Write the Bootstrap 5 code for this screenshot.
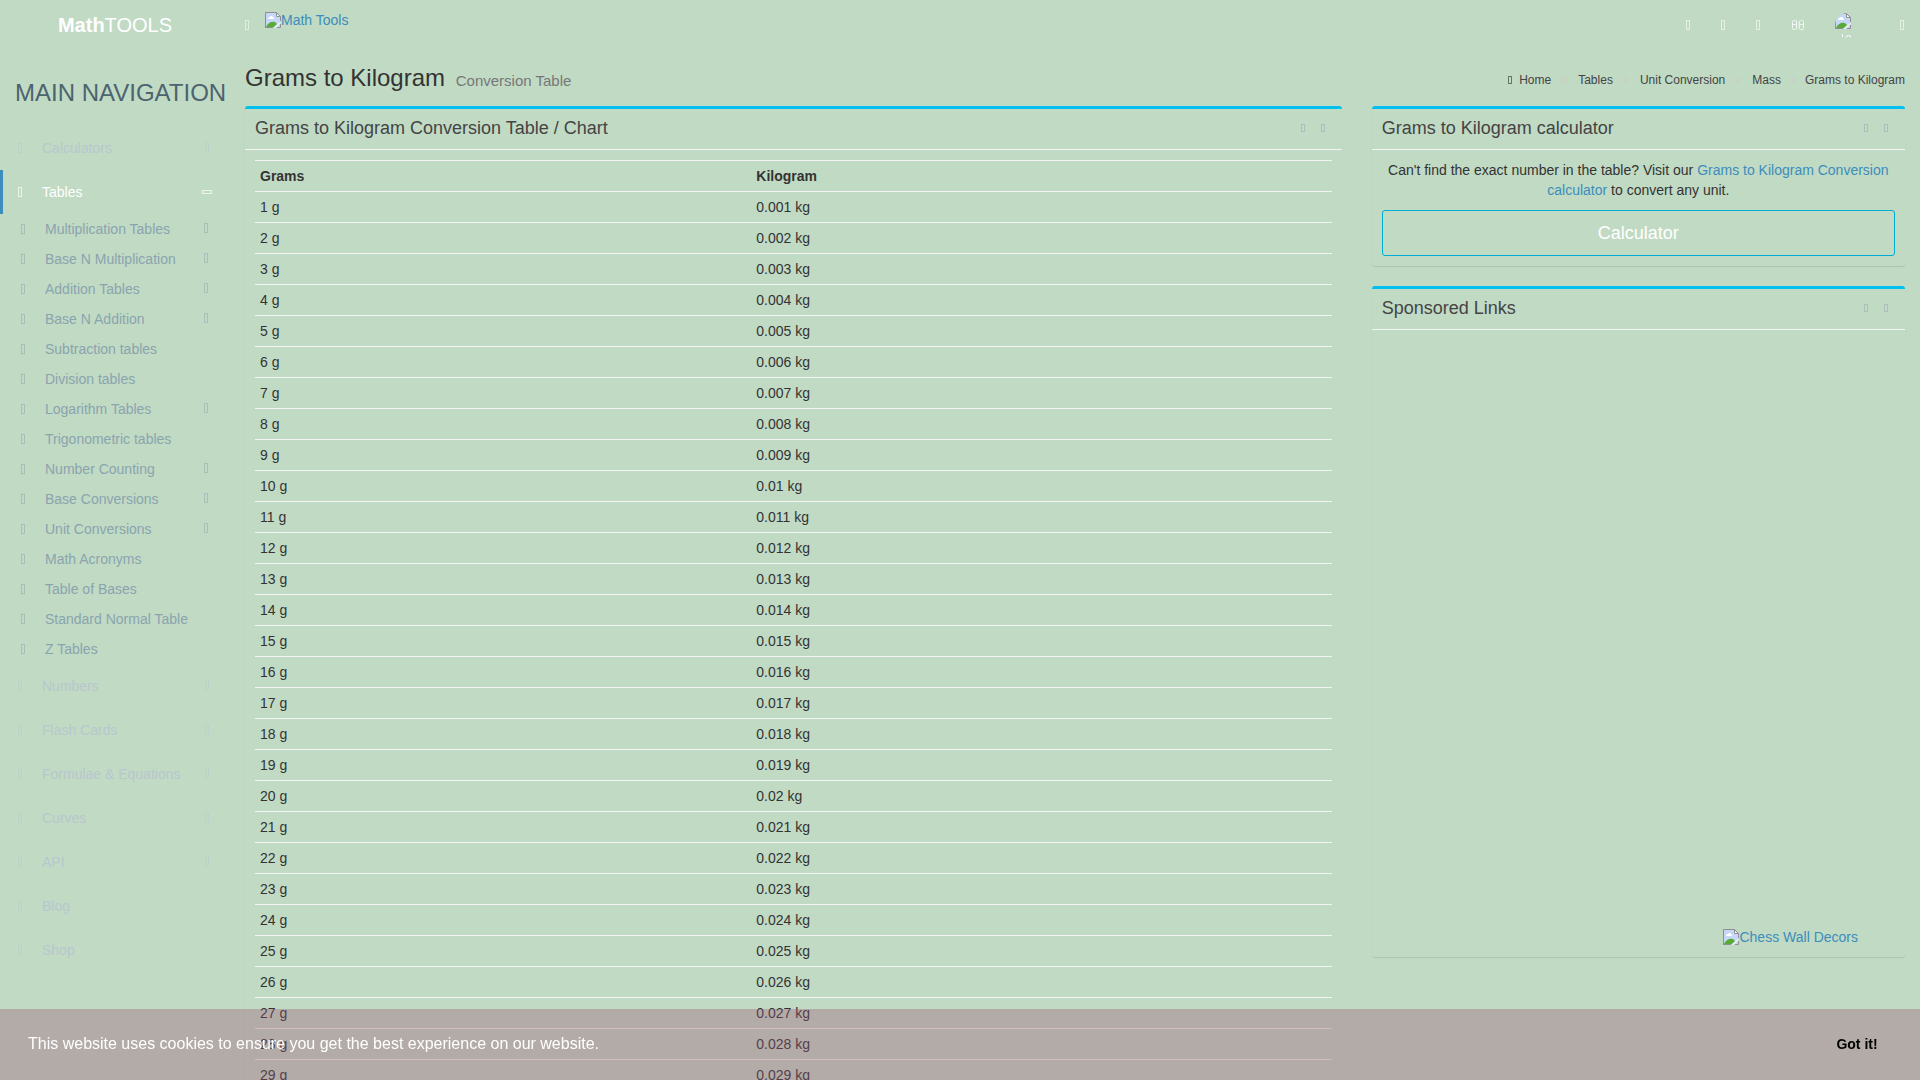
<!DOCTYPE html>
<html lang="en">
<head>
<meta charset="utf-8">
<meta name="viewport" content="width=device-width, initial-scale=1">
<title>Grams to Kilogram Conversion Table</title>
<link href="https://cdn.jsdelivr.net/npm/bootstrap@5.3.0/dist/css/bootstrap.min.css" rel="stylesheet">
<style>
body{background:#c1dac4;color:#333;font-family:"Liberation Sans",Arial,sans-serif;font-size:14px;line-height:20px}
a{color:#3c8dbc;text-decoration:none}
button{font-family:inherit}
.topbar{height:50px}
.topbar-main{padding-left:15px}
.sidebar,.brand{width:230px;flex:none}
.brand{font-size:20px;line-height:50px;color:#fff}
.glyph{display:inline-block;width:4px;height:10px;border:1px solid currentColor;opacity:.5}
.glyph-sm{height:8px}
.glyph-wide{width:10px;height:4px;opacity:.8}
.pic{width:16px;height:16px;flex:none;display:block}
.pic-link{line-height:16px}
.top-icons{color:#fff;padding-right:16px}
.top-icons .glyph{opacity:.6}
.icon-btn{background:none;border:0;padding:0;color:inherit;display:flex}
.icon-gap{margin-left:31px}
.lang-gap{margin-left:32px}
.user-gap{margin-left:31px}
.cog-gap{margin-left:40px}
.avatar{width:25px;height:25px;display:block}
.nav-title{font-size:24px;line-height:26px;color:#4b646f;padding:30px 0 20px 15px;margin:0;font-weight:400;white-space:nowrap}
.side-link{display:flex;align-items:center;justify-content:space-between;height:44px;padding:0 21px 0 15px;border-left:3px solid transparent;color:#b8c7ce}
.label-part .glyph{margin-right:20px}
.side-link.current{color:#fff;border-left-color:#3c8dbc;padding-right:18px}
.side-link.current .glyph{opacity:.7}
.sub-link{display:flex;align-items:center;justify-content:space-between;height:30px;padding:0 22px 0 21px;color:#8aa4af}
.side-link>.glyph:last-child,.sub-link>.glyph:last-child{margin-bottom:2px}
.side-link.current>.glyph:last-child{margin-bottom:0}
.page-title{font-size:24px;line-height:26px;margin:0;font-weight:400}
.page-title small{font-size:15px;color:#777;margin-left:4px}
.page-head{padding:15px 0;height:56px}
.content-area{padding:0 15px}
.crumbs{font-size:12px;line-height:18px;padding-top:6px;color:#444}
.crumbs a{color:#444}
.crumbs li+li::before{content:">";color:#ccc;margin:0 11px 0 9px}
.crumbs li.active::before{margin-right:8px}
.crumbs .glyph{margin-right:7px;height:8px;opacity:.7}
.row-wide{--bs-gutter-x:30px}
.panel{border-top:3px solid #00c0ef;border-radius:3px;box-shadow:0 1px 1px rgba(0,0,0,.1);margin-bottom:20px}
.panel-head{height:41px;padding:0 17px 2px 10px;border-bottom:1px solid #f4f4f4;color:#444}
.panel-head h2{font-size:18px;line-height:20px;margin:0;font-weight:400}
.panel-tools{color:#97a0b3;gap:16px}
.panel-inner{padding:10px}
.units{width:100%;margin:0}
.units th,.units td{padding:5px;border-top:1px solid #f4f4f4;line-height:20px;text-align:left}
.units th:first-child{width:46.1%}
.calc-text{margin-bottom:10px}
.calc-btn{height:46px;border:1px solid #00acd6;border-radius:3px;font-size:18px;color:#fff;padding:0;display:flex;align-items:center;justify-content:center}
.ad-space{height:588px}
.ad-link{padding:1px 37px 0 0}
.ad-inner{padding-bottom:12px}
.cookie{background:rgba(153,84,116,.35);padding:0 28px 2px;height:71px;font-size:16px;color:#fff}
.cookie button{width:70px;height:32px;border:0;background:none;padding:0;color:#000;font-size:14px;font-weight:700}
</style>
<script src="https://cdn.jsdelivr.net/npm/bootstrap@5.3.0/dist/js/bootstrap.bundle.min.js"></script>
</head>
<body class="vh-100 overflow-hidden">
<svg width="0" height="0" class="position-absolute" aria-hidden="true">
  <symbol id="broken" viewBox="0 0 16 16">
    <path d="M.5 .5H11.500L15.500 4.500V15.500H.500Z" fill="#c6d7f7"/>
    <path d="M3 6.500C3 5 4.500 5 5 5C5.500 3.500 8 3.800 8 5.500C9.500 5.500 9.500 7 8.500 7H4Q3 7 3 6.500Z" fill="#fff"/>
    <path d="M1 15C3 11 6 9.500 8.500 9.800C10.500 10 11.500 11.500 12 12L9 15Z" fill="#57ab36"/>
    <path d="M11 1V5H15Z" fill="#fff"/>
    <path d="M.5 16V.5H11.500L15.500 4.500V9M11.500 .5V4.500H15.500M0 15.500H8M12 15.500H15.500V12" fill="none" stroke="#8f8f8f"/>
    <path d="M8.500 15.500L15.500 9.500V11.500L11 15.500Z" fill="#e8f3e8"/>
  </symbol>
</svg>

<header class="topbar d-flex">
  <a href="#" class="brand text-center"><b>Math</b>TOOLS</a>
  <div class="topbar-main d-flex flex-grow-1 justify-content-between">
    <div class="d-flex">
      <button class="icon-btn text-white pt-1 mt-3 me-3 align-self-start" aria-label="Toggle navigation"><span class="glyph"></span></button>
      <a href="#" class="pic-link d-flex align-self-start pt-2 mt-1"><svg class="pic"><use href="#broken"/></svg>Math Tools</a>
    </div>
    <nav class="top-icons d-flex align-items-center" aria-label="Account">
      <button class="icon-btn" aria-label="Share"><span class="glyph"></span></button>
      <button class="icon-btn icon-gap" aria-label="Like"><span class="glyph"></span></button>
      <button class="icon-btn icon-gap" aria-label="Follow"><span class="glyph"></span></button>
      <button class="icon-btn lang-gap" aria-label="Language"><svg width="12" height="10" fill="none" stroke="#fff" opacity=".75"><rect x=".5" y=".5" width="4" height="9" rx="1"/><rect x="7.500" y=".5" width="4" height="9" rx="1"/><path d="M1 4.500H5M7 4.500H11"/><path d="M6 1V9" opacity=".4"/></svg></button>
      <a href="#" class="user-gap" aria-label="User"><svg class="avatar" viewBox="0 0 25 25"><clipPath id="round"><circle cx="12.500" cy="12.500" r="12.500"/></clipPath><g clip-path="url(#round)"><use href="#broken" width="16" height="16"/><path d="M7.500 21V24M11 24.500Q11.500 22.500 13.500 22.500T16 24.500" stroke="#fff" fill="none"/></g></svg></a>
      <button class="icon-btn cog-gap" aria-label="Settings"><span class="glyph"></span></button>
    </nav>
  </div>
</header>

<div class="d-flex">
  <aside class="sidebar">
    <h2 class="nav-title">MAIN NAVIGATION</h2>
    <nav aria-label="Main">
      <a href="#" class="side-link"><span class="label-part"><i class="glyph"></i>Calculators</span><i class="glyph"></i></a>
      <a href="#" class="side-link current"><span class="label-part"><i class="glyph"></i>Tables</span><i class="glyph glyph-wide"></i></a>
      <div class="submenu">
        <a href="#" class="sub-link"><span class="label-part"><i class="glyph"></i>Multiplication Tables</span><i class="glyph"></i></a>
        <a href="#" class="sub-link"><span class="label-part"><i class="glyph"></i>Base N Multiplication</span><i class="glyph"></i></a>
        <a href="#" class="sub-link"><span class="label-part"><i class="glyph"></i>Addition Tables</span><i class="glyph"></i></a>
        <a href="#" class="sub-link"><span class="label-part"><i class="glyph"></i>Base N Addition</span><i class="glyph"></i></a>
        <a href="#" class="sub-link"><span class="label-part"><i class="glyph"></i>Subtraction tables</span></a>
        <a href="#" class="sub-link"><span class="label-part"><i class="glyph"></i>Division tables</span></a>
        <a href="#" class="sub-link"><span class="label-part"><i class="glyph"></i>Logarithm Tables</span><i class="glyph"></i></a>
        <a href="#" class="sub-link"><span class="label-part"><i class="glyph"></i>Trigonometric tables</span></a>
        <a href="#" class="sub-link"><span class="label-part"><i class="glyph"></i>Number Counting</span><i class="glyph"></i></a>
        <a href="#" class="sub-link"><span class="label-part"><i class="glyph"></i>Base Conversions</span><i class="glyph"></i></a>
        <a href="#" class="sub-link"><span class="label-part"><i class="glyph"></i>Unit Conversions</span><i class="glyph"></i></a>
        <a href="#" class="sub-link"><span class="label-part"><i class="glyph"></i>Math Acronyms</span></a>
        <a href="#" class="sub-link"><span class="label-part"><i class="glyph"></i>Table of Bases</span></a>
        <a href="#" class="sub-link"><span class="label-part"><i class="glyph"></i>Standard Normal Table</span></a>
        <a href="#" class="sub-link"><span class="label-part"><i class="glyph"></i>Z Tables</span></a>
      </div>
      <a href="#" class="side-link"><span class="label-part"><i class="glyph"></i>Numbers</span><i class="glyph"></i></a>
      <a href="#" class="side-link"><span class="label-part"><i class="glyph"></i>Flash Cards</span><i class="glyph"></i></a>
      <a href="#" class="side-link"><span class="label-part"><i class="glyph"></i>Formulae &amp; Equations</span><i class="glyph"></i></a>
      <a href="#" class="side-link"><span class="label-part"><i class="glyph"></i>Curves</span><i class="glyph"></i></a>
      <a href="#" class="side-link"><span class="label-part"><i class="glyph"></i>API</span><i class="glyph"></i></a>
      <a href="#" class="side-link"><span class="label-part"><i class="glyph"></i>Blog</span></a>
      <a href="#" class="side-link"><span class="label-part"><i class="glyph"></i>Shop</span></a>
    </nav>
  </aside>

  <main class="content-area flex-grow-1">
    <div class="page-head d-flex justify-content-between">
      <h1 class="page-title">Grams to Kilogram <small>Conversion Table</small></h1>
      <ol class="crumbs list-unstyled d-flex m-0">
        <li><a href="#"><i class="glyph"></i>Home</a></li><li><a href="#">Tables</a></li><li><a href="#">Unit Conversion</a></li><li><a href="#">Mass</a></li><li class="active">Grams to Kilogram</li>
      </ol>
    </div>
    <div class="row row-wide">
      <div class="col-8">
        <section class="panel">
          <div class="panel-head d-flex justify-content-between align-items-center">
            <h2>Grams to Kilogram Conversion Table / Chart</h2>
            <div class="panel-tools d-flex"><button class="icon-btn" aria-label="Collapse"><i class="glyph glyph-sm"></i></button><button class="icon-btn" aria-label="Close"><i class="glyph glyph-sm"></i></button></div>
          </div>
          <div class="panel-inner">
            <table class="units">
              <thead><tr><th>Grams</th><th>Kilogram</th></tr></thead>
              <tbody id="unit-rows"></tbody>
            </table>
          </div>
        </section>
      </div>
      <div class="col-4">
        <section class="panel">
          <div class="panel-head d-flex justify-content-between align-items-center">
            <h2>Grams to Kilogram calculator</h2>
            <div class="panel-tools d-flex"><button class="icon-btn" aria-label="Collapse"><i class="glyph glyph-sm"></i></button><button class="icon-btn" aria-label="Close"><i class="glyph glyph-sm"></i></button></div>
          </div>
          <div class="panel-inner">
            <p class="text-center calc-text">Can't find the exact number in the table? Visit our <a href="#">Grams to Kilogram Conversion calculator</a> to convert any unit.</p>
            <button class="btn calc-btn w-100">Calculator</button>
          </div>
        </section>
        <section class="panel">
          <div class="panel-head d-flex justify-content-between align-items-center">
            <h2>Sponsored Links</h2>
            <div class="panel-tools d-flex"><button class="icon-btn" aria-label="Collapse"><i class="glyph glyph-sm"></i></button><button class="icon-btn" aria-label="Close"><i class="glyph glyph-sm"></i></button></div>
          </div>
          <div class="panel-inner ad-inner">
            <div class="ad-space"></div>
            <div class="ad-link d-flex justify-content-end"><a href="#" class="pic-link d-flex"><svg class="pic"><use href="#broken"/></svg>Chess Wall Decors</a></div>
          </div>
        </section>
      </div>
    </div>
  </main>
</div>

<div class="cookie fixed-bottom d-flex align-items-center justify-content-between" role="dialog" aria-label="Cookies">
  <span>This website uses cookies to ensure you get the best experience on our website.</span>
  <button>Got it!</button>
</div>
<script>
const rows = document.getElementById('unit-rows');
for (let g = 1; g <= 29; g++) {
  const row = rows.insertRow();
  row.insertCell().textContent = g + ' g';
  row.insertCell().textContent = g / 1000 + ' kg';
}
</script>
</body>
</html>
